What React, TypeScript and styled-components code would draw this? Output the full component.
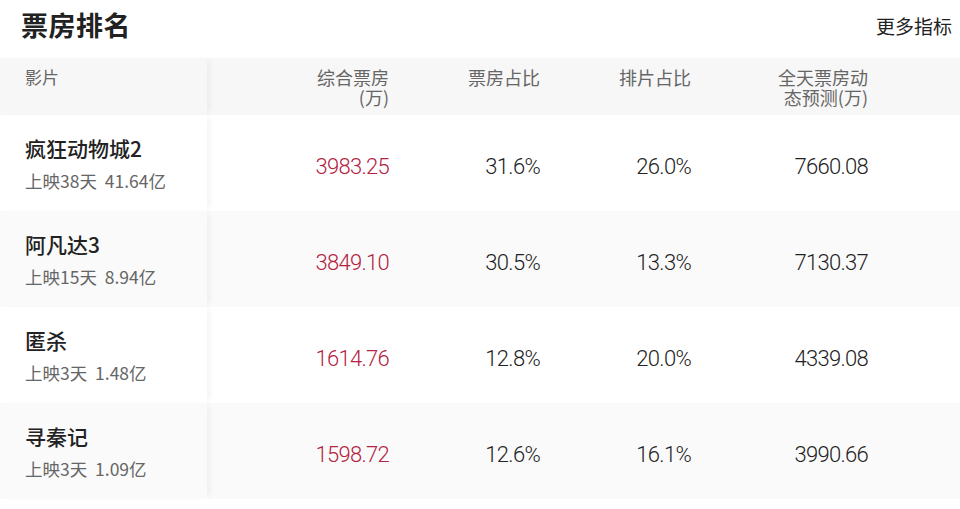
import React from 'react';
import styled, { createGlobalStyle } from 'styled-components';

const GlobalStyle = createGlobalStyle`
  body {
    margin: 0;
    background: #fff;
    font-family: 'Noto Sans CJK SC', 'Noto Sans', sans-serif;
    color: #222;
  }
`;

const Page = styled.div`
  width: 960px;
  height: 509px;
  overflow: hidden;
  background: #fff;
`;

const TitleBar = styled.div`
  height: 58px;
  display: flex;
  align-items: center;
  justify-content: space-between;
  padding: 0 8px 0 21px;
`;

const Title = styled.h1`
  margin: -10px 0 0;
  font-size: 27px;
  font-weight: 700;
  color: #222;
  letter-spacing: 0.5px;
`;

const MoreLink = styled.a`
  font-size: 19px;
  color: #222;
  text-decoration: none;
  margin-top: -7px;
  cursor: pointer;
`;

const Row = styled.div<{ $bg: string; $height: number }>`
  display: grid;
  grid-template-columns: 207px 182px 151px 151px 177px 1fr;
  height: ${(p) => p.$height}px;
  background: ${(p) => p.$bg};
`;

const FixedCell = styled.div`
  background: inherit;
  box-shadow: 5px 0 7px -3px rgba(0, 0, 0, 0.06);
  z-index: 1;
`;

const HeadFixed = styled(FixedCell)`
  padding: 9px 0 0 25px;
  font-size: 17px;
  line-height: 20px;
  color: #666;
`;

const HeadCell = styled.div`
  display: flex;
  justify-content: flex-end;
  padding-top: 9px;
`;

const HeadLabel = styled.span<{ $max: number }>`
  max-width: ${(p) => p.$max}px;
  font-size: 18px;
  line-height: 20px;
  color: #666;
  text-align: right;
`;

const MovieCell = styled(FixedCell)`
  display: flex;
  flex-direction: column;
  padding: 21px 0 0 25px;
  gap: 9px;
`;

const MovieName = styled.div`
  font-size: 21px;
  line-height: 24px;
  font-weight: 500;
  color: #222;
`;

const MovieMeta = styled.div`
  font-size: 17.5px;
  line-height: 24px;
  color: #666;
  white-space: pre;
`;

const NumCell = styled.div<{ $accent?: boolean }>`
  display: flex;
  align-items: center;
  justify-content: flex-end;
  padding-top: 6px;
  font-family: Roboto, 'Noto Sans', sans-serif;
  font-weight: 300;
  font-size: 22px;
  letter-spacing: -0.7px;
  color: ${(p) => (p.$accent ? '#b3223f' : '#222')};
`;

type Movie = {
  name: string;
  meta: string;
  box: string;
  boxRate: string;
  showRate: string;
  forecast: string;
};

const movies: Movie[] = [
  { name: '疯狂动物城2', meta: '上映38天  41.64亿', box: '3983.25', boxRate: '31.6%', showRate: '26.0%', forecast: '7660.08' },
  { name: '阿凡达3', meta: '上映15天  8.94亿', box: '3849.10', boxRate: '30.5%', showRate: '13.3%', forecast: '7130.37' },
  { name: '匿杀', meta: '上映3天  1.48亿', box: '1614.76', boxRate: '12.8%', showRate: '20.0%', forecast: '4339.08' },
  { name: '寻秦记', meta: '上映3天  1.09亿', box: '1598.72', boxRate: '12.6%', showRate: '16.1%', forecast: '3990.66' },
];

export default function App() {
  return (
    <Page>
      <GlobalStyle />
      <TitleBar>
        <Title>票房排名</Title>
        <MoreLink>更多指标</MoreLink>
      </TitleBar>
      <Row $bg="#f7f7f7" $height={57}>
        <HeadFixed>影片</HeadFixed>
        <HeadCell>
          <HeadLabel $max={76}>综合票房(万)</HeadLabel>
        </HeadCell>
        <HeadCell>
          <HeadLabel $max={80}>票房占比</HeadLabel>
        </HeadCell>
        <HeadCell>
          <HeadLabel $max={80}>排片占比</HeadLabel>
        </HeadCell>
        <HeadCell>
          <HeadLabel $max={92}>全天票房动态预测(万)</HeadLabel>
        </HeadCell>
        <div />
      </Row>
      {movies.map((m, i) => (
        <Row key={m.name} $bg={i % 2 === 0 ? '#ffffff' : '#fafafa'} $height={96}>
          <MovieCell>
            <MovieName>{m.name}</MovieName>
            <MovieMeta>{m.meta}</MovieMeta>
          </MovieCell>
          <NumCell $accent>{m.box}</NumCell>
          <NumCell>{m.boxRate}</NumCell>
          <NumCell>{m.showRate}</NumCell>
          <NumCell>{m.forecast}</NumCell>
          <div />
        </Row>
      ))}
    </Page>
  );
}
